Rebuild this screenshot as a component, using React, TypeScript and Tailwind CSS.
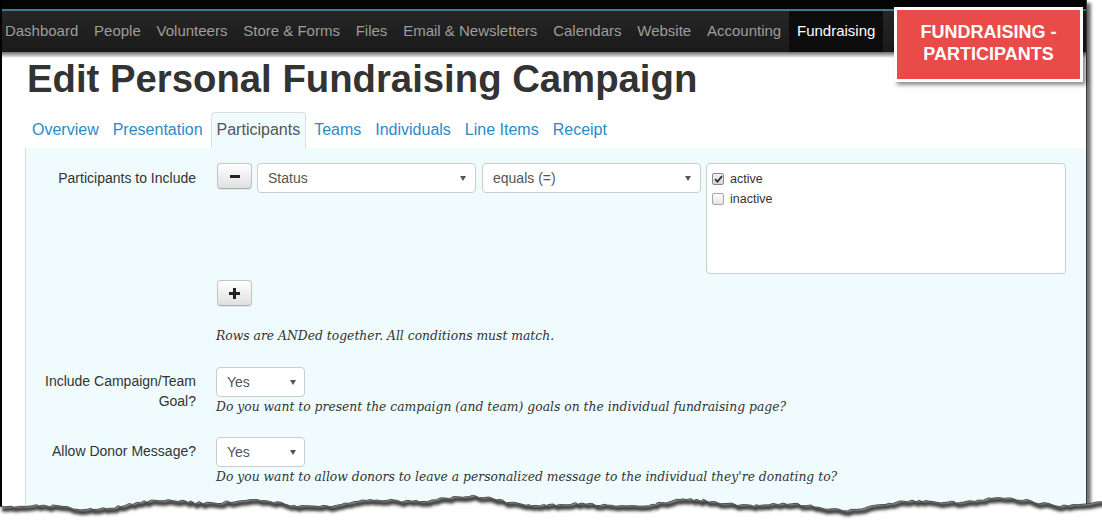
import React from "react";

const navItems = [
  "Dashboard",
  "People",
  "Volunteers",
  "Store & Forms",
  "Files",
  "Email & Newsletters",
  "Calendars",
  "Website",
  "Accounting",
];

const tabs = ["Overview", "Presentation", "Participants", "Teams", "Individuals", "Line Items", "Receipt"];

// torn edge geometry
let seed = 987654321;
const rnd = () => {
  seed = (seed * 1103515245 + 12345) % 2147483648;
  return seed / 2147483648;
};
const pts: [number, number][] = [];
for (let x = 0; x < 1102; ) {
  const y =
    503 +
    3 * Math.sin(x / 41) +
    2.2 * Math.sin(x / 17 + 2) +
    2 * Math.sin(x / 113 + 1) +
    (rnd() - 0.5) * 2.4;
  pts.push([x, y]);
  x += 2 + rnd() * 4;
}
pts.push([1102, 503]);
const edge = pts.map((p, i) => `${i === 0 ? "M" : "L"}${p[0].toFixed(1)},${p[1].toFixed(1)}`).join(" ");
const fillPath = `${edge} L1102,526 L0,526 Z`;

function Caret() {
  return (
    <svg width="6" height="5" viewBox="0 0 6 5" className="shrink-0">
      <path d="M0,0 L6,0 L3,5 Z" fill="#555" />
    </svg>
  );
}

function Select({ label, cls }: { label: string; cls: string }) {
  return (
    <div
      className={`flex items-center justify-between h-[30px] border border-[#ccc] rounded-[4px] bg-white pl-[10px] text-[14px] text-[#555] shrink-0 ${cls}`}
    >
      <span>{label}</span>
      <Caret />
    </div>
  );
}

function Btn({ kind }: { kind: "minus" | "plus" }) {
  return (
    <div className="flex items-center justify-center w-[35px] h-[26px] ml-[1px] border border-[#c4c4c4] border-b-[#adadad] rounded-[4px] bg-linear-to-b from-white to-[#e0e0e0] shadow-[0_1px_1px_rgba(0,0,0,0.08)] shrink-0">
      {kind === "minus" ? (
        <svg width="10" height="3" viewBox="0 0 10 3">
          <rect x="0" y="0" width="10" height="3" fill="#222" />
        </svg>
      ) : (
        <svg width="11" height="11" viewBox="0 0 11 11">
          <rect x="0" y="4" width="11" height="3" fill="#222" />
          <rect x="4" y="0" width="3" height="11" fill="#222" />
        </svg>
      )}
    </div>
  );
}

function Check({ checked, label }: { checked: boolean; label: string }) {
  return (
    <div className="flex items-center h-[20px] gap-[6px]">
      <span
        className={`flex items-center justify-center w-[12px] h-[12px] rounded-[2px] border ${
          checked ? "border-[#8a8a8a] bg-linear-to-b from-[#f2f2f2] to-[#d6d6d6]" : "border-[#a5a5a5] bg-linear-to-b from-white to-[#e3e3e3]"
        }`}
      >
        {checked && (
          <svg width="9" height="8" viewBox="0 0 9 8">
            <path d="M1,4.2 L3.4,6.6 L8,1.2" stroke="#333" strokeWidth="1.8" fill="none" />
          </svg>
        )}
      </span>
      <span className="text-[12.5px] text-[#333]">{label}</span>
    </div>
  );
}

const help = "font-['DejaVu_Serif',serif] italic text-[12.35px] leading-[20px] text-[#333] whitespace-nowrap";

export default function App() {
  return (
    <div className="relative w-[1102px] h-[526px] bg-white overflow-hidden font-['Liberation_Sans',Arial,sans-serif]">
      <div className="relative flex flex-col w-[1087px] h-[518px] bg-white border-l-2 border-l-black border-r border-r-[#3a3a3a] shadow-[4px_3px_3px_rgba(0,0,0,0.55)]">
        {/* top strip */}
        <div className="h-[9px] bg-[#050505] shrink-0" />
        <div className="h-[2px] bg-[#3b7f8c] shrink-0" />
        {/* navbar */}
        <div className="flex items-stretch h-[41px] bg-linear-to-b from-[#262626] to-[#1a1a1a] shrink-0 text-[15px]">
          <div className="flex items-stretch ml-[-5px]">
            {navItems.map((n) => (
              <div key={n} className="flex items-center px-[7.9px] text-[#9d9d9d] whitespace-nowrap">
                {n}
              </div>
            ))}
            <div className="flex items-center px-[7.9px] text-white bg-[#0d0d0d] whitespace-nowrap">Fundraising</div>
          </div>
        </div>
        <div className="h-[6px] bg-linear-to-b from-[#6e6e6e] to-white shrink-0" />
        {/* heading */}
        <h1 className="h-[42px] leading-[42px] ml-[25px] text-[38.3px] font-bold text-[#333] whitespace-nowrap shrink-0">
          Edit Personal Fundraising Campaign
        </h1>
        {/* tabs */}
        <div className="flex mt-[12px] ml-[24px] shrink-0">
          {tabs.map((t) => {
            const active = t === "Participants";
            return (
              <div
                key={t}
                className={`mr-[2px] px-[5px] py-[6px] text-[16px] leading-[22px] border rounded-t-[4px] ${
                  active
                    ? "border-[#ddd] border-b-transparent bg-[#effbfd] text-[#555]"
                    : "border-transparent text-[#2a8bc9]"
                }`}
              >
                {t}
              </div>
            );
          })}
        </div>
        {/* panel */}
        <div className="flex-1 ml-[23px] border-l border-[#ddd] bg-[#effbfd] pt-[15px] flex flex-col text-[14px] text-[#333]">
          {/* row 1 */}
          <div className="flex gap-[20px]">
            <div className="w-[170px] text-right leading-[20px] pt-[5px] shrink-0">Participants to Include</div>
            <div className="flex flex-col">
              <div className="flex items-start">
                <Btn kind="minus" />
                <Select label="Status" cls="w-[219px] ml-[5px] pr-[9px]" />
                <Select label="equals (=)" cls="w-[219px] ml-[6px] pr-[9px]" />
                <div className="w-[360px] h-[111px] ml-[5px] border border-[#ccc] rounded-[4px] bg-white pl-[5px] pt-[5px] shrink-0">
                  <Check checked label="active" />
                  <Check checked={false} label="inactive" />
                </div>
              </div>
              <div className="mt-[6px]">
                <Btn kind="plus" />
              </div>
              <div className={`mt-[20px] ${help}`}>Rows are ANDed together. All conditions must match.</div>
            </div>
          </div>
          {/* row 2 */}
          <div className="flex gap-[20px] mt-[21px]">
            <div className="w-[170px] text-right leading-[20px] pt-[4px] shrink-0">
              Include Campaign/Team
              <br />
              Goal?
            </div>
            <div className="flex flex-col">
              <Select label="Yes" cls="w-[89px] pr-[8px]" />
              <div className={help}>Do you want to present the campaign (and team) goals on the individual fundraising page?</div>
            </div>
          </div>
          {/* row 3 */}
          <div className="flex gap-[20px] mt-[20px]">
            <div className="w-[170px] text-right leading-[20px] pt-[4px] shrink-0">Allow Donor Message?</div>
            <div className="flex flex-col">
              <Select label="Yes" cls="w-[89px] pr-[8px]" />
              <div className={help}>Do you want to allow donors to leave a personalized message to the individual they're donating to?</div>
            </div>
          </div>
        </div>
      </div>

      {/* badge */}
      <div className="absolute left-[894px] top-[7px] w-[189px] h-[75px] border-[3px] border-white bg-[#e94b48] shadow-[3px_3px_4px_rgba(0,0,0,0.45)] flex flex-col items-center justify-center pb-[4px] text-white font-bold text-[18px] leading-[22px]">
        <div>FUNDRAISING -</div>
        <div>PARTICIPANTS</div>
      </div>

      {/* torn bottom edge */}
      <svg className="absolute left-0 top-0 pointer-events-none" width="1102" height="526" viewBox="0 0 1102 526">
        <defs>
          <clipPath id="below">
            <path d={fillPath} />
          </clipPath>
          <filter id="blur" x="-5%" y="-50%" width="110%" height="200%">
            <feGaussianBlur stdDeviation="1.6" />
          </filter>
        </defs>
        <path d={fillPath} fill="#fff" />
        <g clipPath="url(#below)">
          <path d={edge} transform="translate(2,2.5)" stroke="#3a3a3a" strokeWidth="5" fill="none" filter="url(#blur)" />
        </g>
        <path d={edge} stroke="#4a4a4a" strokeWidth="1" fill="none" />
      </svg>
    </div>
  );
}
